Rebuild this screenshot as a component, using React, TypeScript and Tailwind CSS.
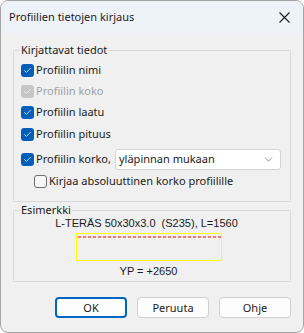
import { Check, ChevronDown } from "lucide-react";

type BoxProps = { checked?: boolean; disabled?: boolean };

function Box({ checked, disabled }: BoxProps) {
  if (!checked) {
    return <span className="w-[13px] h-[13px] shrink-0 rounded-[3px] border border-[#6f6f6f] bg-[#f7f7f7]" />;
  }
  return (
    <span
      className={
        disabled
          ? "w-[13px] h-[13px] shrink-0 rounded-[3px] bg-[#c6c6c6] flex items-center justify-center"
          : "w-[13px] h-[13px] shrink-0 rounded-[3px] bg-[#005fb8] flex items-center justify-center"
      }
    >
      <Check size={9} strokeWidth={2} color="#ffffff" />
    </span>
  );
}

function Row({ label, checked, disabled }: { label: string; checked?: boolean; disabled?: boolean }) {
  return (
    <div className="h-[21px] flex items-center gap-[2px]">
      <Box checked={checked} disabled={disabled} />
      <span className={disabled ? "text-[#a0a0a0]" : "text-[#1b1b1b]"}>{label}</span>
    </div>
  );
}

function Btn({ label, focus }: { label: string; focus?: boolean }) {
  return (
    <button
      className={
        focus
          ? "w-[72px] h-[21px] rounded-[4px] border-2 border-[#0067c0] bg-[#fdfdfd] text-[11px] text-[#1b1b1b] leading-none"
          : "w-[72px] h-[21px] rounded-[4px] border border-[#d0d0d0] bg-[#fdfdfd] text-[11px] text-[#1b1b1b] leading-none"
      }
    >
      {label}
    </button>
  );
}

export default function App() {
  return (
    <div className="w-[304px] h-[333px] bg-white" style={{ fontFamily: '"Noto Sans", sans-serif' }}>
      <div className="w-full h-full rounded-[8px] border border-[#a4a4a4] overflow-hidden flex flex-col bg-[#f0f0f0] text-[11px]">
        <div className="h-[32px] shrink-0 bg-[#eef3f9] flex items-center justify-between pl-[8px] pr-[13px]">
          <span className="text-[#1b1b1b] text-[11px]">Profiilien tietojen kirjaus</span>
          <svg width="11" height="11" viewBox="0 0 11 11">
            <path d="M0.5 0.5 L10.5 10.5 M10.5 0.5 L0.5 10.5" stroke="#1b1b1b" strokeWidth="1.1" fill="none" />
          </svg>
        </div>

        <div className="flex flex-col px-[12px] pt-[9px]">
          <fieldset className="border border-[#d9d9d9] rounded-[1px] pl-[7px] pr-[8px] pt-[2px] pb-[9px]">
            <legend className="ml-[-1px] px-[1px] leading-[16px] text-[#1b1b1b]">Kirjattavat tiedot</legend>
            <Row label="Profiilin nimi" checked />
            <Row label="Profiilin koko" checked disabled />
            <Row label="Profiilin laatu" checked />
            <div className="h-[22px] flex items-center gap-[2px]">
              <Box checked />
              <span className="text-[#1b1b1b]">Profiilin pituus</span>
            </div>
            <div className="h-[22px] mt-[3px] flex items-center">
              <div className="w-[94px] shrink-0 flex items-center gap-[2px] whitespace-nowrap">
                <Box checked />
                <span className="text-[#1b1b1b]">Profiilin korko,</span>
              </div>
              <div className="w-[166px] h-[21px] bg-white border border-[#d4d4d4] rounded-[3px] flex items-center justify-between pl-[3px] pr-[5px]">
                <span className="text-[#1b1b1b]">yläpinnan mukaan</span>
                <ChevronDown size={13} strokeWidth={1.3} color="#6a6a6a" />
              </div>
            </div>
            <div className="h-[22px] flex items-center gap-[2px] pl-[13px]">
              <Box />
              <span className="text-[#1b1b1b]">Kirjaa absoluuttinen korko profiilille</span>
            </div>
          </fieldset>

          <fieldset className="border border-[#d9d9d9] rounded-[1px] pl-[7px] pb-[3px] flex flex-col items-center">
            <legend className="ml-[-1px] px-[1px] leading-[16px] text-[#1b1b1b]">Esimerkki</legend>
            <div
              className="-mt-[1px] mr-[18px] leading-[12px] text-[#1b1b1b] text-[11px] whitespace-pre"
              style={{ fontFamily: '"Liberation Sans", Arial, sans-serif' }}
            >
              {"L-TERÄS 50x30x3.0  (S235), L=1560"}
            </div>
            <div className="mt-[4px] mr-[14px] w-[146px] h-[28px] border border-[#ffff00] pt-[2px]">
              <svg width="144" height="2" viewBox="0 0 144 2" className="block">
                <line x1="1" y1="1" x2="144" y2="1" stroke="#ff4b4b" strokeWidth="1.5" strokeDasharray="3 2" />
              </svg>
            </div>
            <div
              className="mt-[3px] mr-[14px] leading-[14px] text-[#1b1b1b] text-[11px]"
              style={{ fontFamily: '"Liberation Sans", Arial, sans-serif' }}
            >
              YP = +2650
            </div>
          </fieldset>

          <div className="mt-[15px] flex justify-end gap-[10px]">
            <Btn label="OK" focus />
            <Btn label="Peruuta" />
            <Btn label="Ohje" />
          </div>
        </div>
      </div>
    </div>
  );
}
